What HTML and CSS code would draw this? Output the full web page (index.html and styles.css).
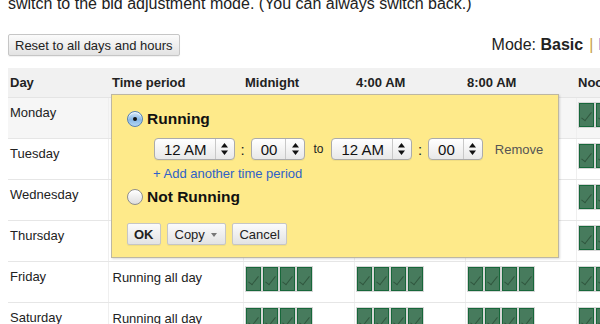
FILE: index.html
```html
<!DOCTYPE html>
<html lang="en">
<head>
    <meta charset="UTF-8">
    <title>Ad schedule</title>
    <link rel="stylesheet" href="styles.css">
</head>
<body>
    <div class="page">
        <p class="intro">switch to the bid adjustment mode. (You can always switch back.)</p>

        <div class="toolbar">
            <button class="btn">Reset to all days and hours</button>
            <div class="mode">Mode: <b>Basic</b><span class="sep">|</span><a href="#">Bid adjustment</a></div>
        </div>

        <div class="grid">
            <table class="schedule">
                <colgroup>
                    <col class="c-day"><col class="c-period">
                    <col class="c-hour"><col class="c-hour"><col class="c-hour">
                    <col class="c-hour"><col class="c-hour"><col class="c-hour">
                </colgroup>
                <thead>
                    <tr>
                        <th>Day</th><th class="period">Time period</th>
                        <th>Midnight</th><th>4:00 AM</th><th>8:00 AM</th>
                        <th>Noon</th><th>4:00 PM</th><th>8:00 PM</th>
                    </tr>
                </thead>
                <tbody>
                    <tr class="editing">
                        <td>Monday</td><td class="period">Running all day</td>
                        <td class="hours"><span></span><span></span><span></span><span></span></td>
                        <td class="hours"><span></span><span></span><span></span><span></span></td>
                        <td class="hours"><span></span><span></span><span></span><span></span></td>
                        <td class="hours"><span></span><span></span><span></span><span></span></td>
                        <td class="hours"><span></span><span></span><span></span><span></span></td>
                        <td class="hours"><span></span><span></span><span></span><span></span></td>
                    </tr>
                    <tr>
                        <td>Tuesday</td><td class="period">Running all day</td>
                        <td class="hours"><span></span><span></span><span></span><span></span></td>
                        <td class="hours"><span></span><span></span><span></span><span></span></td>
                        <td class="hours"><span></span><span></span><span></span><span></span></td>
                        <td class="hours"><span></span><span></span><span></span><span></span></td>
                        <td class="hours"><span></span><span></span><span></span><span></span></td>
                        <td class="hours"><span></span><span></span><span></span><span></span></td>
                    </tr>
                    <tr>
                        <td>Wednesday</td><td class="period">Running all day</td>
                        <td class="hours"><span></span><span></span><span></span><span></span></td>
                        <td class="hours"><span></span><span></span><span></span><span></span></td>
                        <td class="hours"><span></span><span></span><span></span><span></span></td>
                        <td class="hours"><span></span><span></span><span></span><span></span></td>
                        <td class="hours"><span></span><span></span><span></span><span></span></td>
                        <td class="hours"><span></span><span></span><span></span><span></span></td>
                    </tr>
                    <tr>
                        <td>Thursday</td><td class="period">Running all day</td>
                        <td class="hours"><span></span><span></span><span></span><span></span></td>
                        <td class="hours"><span></span><span></span><span></span><span></span></td>
                        <td class="hours"><span></span><span></span><span></span><span></span></td>
                        <td class="hours"><span></span><span></span><span></span><span></span></td>
                        <td class="hours"><span></span><span></span><span></span><span></span></td>
                        <td class="hours"><span></span><span></span><span></span><span></span></td>
                    </tr>
                    <tr>
                        <td>Friday</td><td class="period">Running all day</td>
                        <td class="hours"><span></span><span></span><span></span><span></span></td>
                        <td class="hours"><span></span><span></span><span></span><span></span></td>
                        <td class="hours"><span></span><span></span><span></span><span></span></td>
                        <td class="hours"><span></span><span></span><span></span><span></span></td>
                        <td class="hours"><span></span><span></span><span></span><span></span></td>
                        <td class="hours"><span></span><span></span><span></span><span></span></td>
                    </tr>
                    <tr>
                        <td>Saturday</td><td class="period">Running all day</td>
                        <td class="hours"><span></span><span></span><span></span><span></span></td>
                        <td class="hours"><span></span><span></span><span></span><span></span></td>
                        <td class="hours"><span></span><span></span><span></span><span></span></td>
                        <td class="hours"><span></span><span></span><span></span><span></span></td>
                        <td class="hours"><span></span><span></span><span></span><span></span></td>
                        <td class="hours"><span></span><span></span><span></span><span></span></td>
                    </tr>
                    <tr>
                        <td>Sunday</td><td class="period">Running all day</td>
                        <td class="hours"><span></span><span></span><span></span><span></span></td>
                        <td class="hours"><span></span><span></span><span></span><span></span></td>
                        <td class="hours"><span></span><span></span><span></span><span></span></td>
                        <td class="hours"><span></span><span></span><span></span><span></span></td>
                        <td class="hours"><span></span><span></span><span></span><span></span></td>
                        <td class="hours"><span></span><span></span><span></span><span></span></td>
                    </tr>
                </tbody>
            </table>

            <!-- edit bubble for Monday -->
            <div class="editor">
                <div class="choice"><span class="radio on"></span>Running</div>

                <div class="times">
                    <div class="sel"><span class="val">12 AM</span><span class="spin"><svg width="7" height="12" viewBox="0 0 7 12"><path d="M3.5 0L7 4.5H0z M3.5 12L0 7.5H7z"/></svg></span></div>
                    <span class="colon">:</span>
                    <div class="sel"><span class="val">00</span><span class="spin"><svg width="7" height="12" viewBox="0 0 7 12"><path d="M3.5 0L7 4.5H0z M3.5 12L0 7.5H7z"/></svg></span></div>
                    <span class="to">to</span>
                    <div class="sel"><span class="val">12 AM</span><span class="spin"><svg width="7" height="12" viewBox="0 0 7 12"><path d="M3.5 0L7 4.5H0z M3.5 12L0 7.5H7z"/></svg></span></div>
                    <span class="colon">:</span>
                    <div class="sel"><span class="val">00</span><span class="spin"><svg width="7" height="12" viewBox="0 0 7 12"><path d="M3.5 0L7 4.5H0z M3.5 12L0 7.5H7z"/></svg></span></div>
                    <span class="remove">Remove</span>
                </div>

                <a class="add" href="#">+ Add another time period</a>

                <div class="choice off"><span class="radio"></span>Not Running</div>

                <div class="actions">
                    <button class="btn ok">OK</button>
                    <button class="btn copy">Copy <span class="caret"></span></button>
                    <button class="btn">Cancel</button>
                </div>
            </div>
        </div>
    </div>
</body>
</html>
```

FILE: styles.css
```css
body {
    margin: 0;
    font-family: "Liberation Sans", Arial, sans-serif;
    font-size: 13px;
    color: #222;
    background: #fff;
    overflow: hidden;
}

.page {
    padding: 0 8px;
    width: 960px;
}

.intro {
    margin: -6px 0 0;
    font-size: 16px;
    line-height: 20px;
}

.toolbar {
    display: flex;
    align-items: baseline;
    margin-top: 20px;
}

.btn {
    font-family: "Liberation Sans", Arial, sans-serif;
    font-size: 13px;
    color: #222;
    height: 22px;
    padding: 0 6px;
    border: 1px solid #c6c6c6;
    border-radius: 2px;
    background: linear-gradient(#fbfbfb, #e3e3e3);
    box-shadow: 0 1px 1px rgba(0, 0, 0, 0.06);
}

.mode {
    margin-left: 312px;
    font-size: 16px;
    white-space: nowrap;
}

.mode .sep {
    color: #c8a24a;
    margin: 0 5px 0 6px;
}

.mode a {
    color: #2255cc;
    text-decoration: none;
}

.grid {
    position: relative;
    margin-top: 12px;
}

.schedule {
    border-collapse: collapse;
    table-layout: fixed;
    width: 901px;
}

.c-day { width: 100px; }
.c-period { width: 135px; }
.c-hour { width: 111px; }

.schedule thead tr {
    height: 29px;
}

.schedule tbody tr {
    height: 41px;
}

.schedule th {
    background: #f1f1f1;
    padding: 0 2px;
    text-align: left;
    font-weight: bold;
    border-bottom: 1px solid #e4e4e4;
}

.schedule td {
    padding: 7px 2px 0;
    vertical-align: top;
    border-bottom: 1px solid #e6e6e6;
    border-left: 1px solid #efefef;
    line-height: 16px;
}

.schedule td:first-child {
    border-left: none;
}

.schedule .period {
    padding-left: 4px;
}

.schedule td.period {
    padding-top: 8px;
}

.schedule tr.editing td {
    background: #f6f6f6;
}

.schedule td.hours {
    padding-top: 5px;
    font-size: 0;
    line-height: 0;
}

.hours span {
    display: inline-block;
    position: relative;
    width: 15px;
    height: 24px;
    box-sizing: border-box;
    margin-right: 2px;
    background: #477b5d;
    border: 1px solid #17673a;
    box-shadow: 0 0 0 1px #d6d6d6;
}

.hours span::after {
    content: "";
    position: absolute;
    left: 4px;
    top: 6px;
    width: 4px;
    height: 10px;
    border-right: 1px solid #31573f;
    border-bottom: 1px solid #31573f;
    transform: rotate(38deg);
}

/* popup over the table */
.editor {
    position: absolute;
    left: 103px;
    top: 26px;
    width: 448px;
    height: 164px;
    box-sizing: border-box;
    padding: 15px 0 0 15px;
    background: #feea8a;
    border: 1px solid #bdb7a2;
    box-shadow: 1px 1px 2px rgba(0, 0, 0, 0.15);
}

.choice {
    display: flex;
    align-items: center;
    gap: 4px;
    height: 18px;
    font-size: 15.5px;
    font-weight: bold;
    color: #111;
}

.choice.off {
    margin-top: 6px;
}

.radio {
    position: relative;
    width: 16px;
    height: 16px;
    box-sizing: border-box;
    border-radius: 50%;
    border: 1px solid #8e8e8e;
    background: linear-gradient(#ffffff, #dedede);
    box-shadow: inset 0 1px 1px rgba(255, 255, 255, 0.9);
}

.radio.on {
    border-color: #5480b4;
    background: linear-gradient(#d8e9f9, #86b7e6 55%, #b4d6f3);
}

.radio.on::after {
    content: "";
    position: absolute;
    left: 5px;
    top: 5px;
    width: 4px;
    height: 4px;
    border-radius: 50%;
    background: #111;
}

.times {
    display: flex;
    align-items: center;
    margin: 10px 0 0 27px;
}

.sel {
    display: flex;
    align-items: center;
    height: 22px;
    box-sizing: border-box;
    border: 1px solid #ababab;
    border-radius: 4px;
    background: linear-gradient(#ffffff, #e8e8e8);
    box-shadow: 0 1px 0 rgba(0, 0, 0, 0.05);
}

.sel .val {
    padding: 0 8px 0 9px;
    font-size: 15px;
    color: #111;
}

.sel .spin {
    display: flex;
    align-items: center;
    justify-content: center;
    width: 19px;
    height: 100%;
    box-sizing: border-box;
    border-left: 1px solid #c8c8c8;
}

.spin svg {
    fill: #111;
}

.colon {
    margin: 0 6px;
    font-size: 15px;
}

.to {
    margin: 0 8px;
    font-size: 12px;
}

.remove {
    margin-left: 12px;
    color: #555;
}

.add {
    display: block;
    margin: 6px 0 0 26px;
    line-height: 16px;
    color: #2f62c8;
    text-decoration: none;
}

.actions {
    display: flex;
    gap: 6px;
    margin-top: 17px;
}

.btn.ok {
    font-weight: bold;
}

.btn.copy {
    padding: 0 8px 0 7px;
}

.caret {
    display: inline-block;
    margin-left: 3px;
    vertical-align: middle;
    border-left: 3.5px solid transparent;
    border-right: 3.5px solid transparent;
    border-top: 4px solid #777;
}
```
